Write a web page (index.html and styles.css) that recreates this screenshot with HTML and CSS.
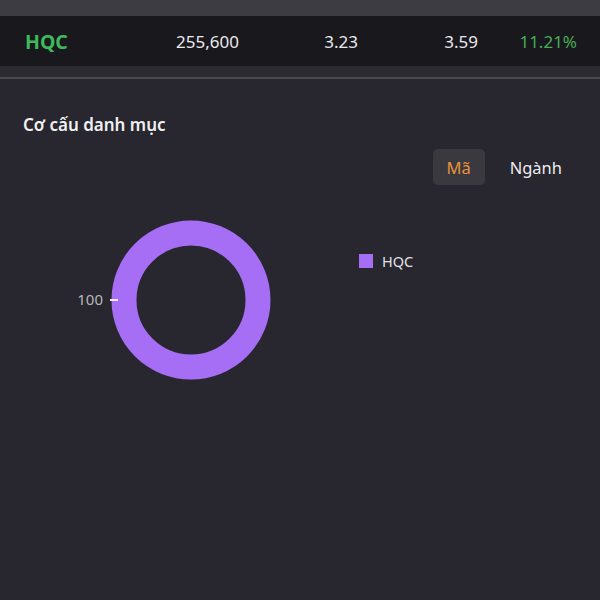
FILE: index.html
```html
<!DOCTYPE html>
<html lang="vi">
<head>
  <meta charset="UTF-8" />
  <meta name="viewport" content="width=device-width, initial-scale=1" />
  <title>Cơ cấu danh mục</title>
  <link rel="stylesheet" href="styles.css">
</head>
<body>

  <div class="top-band"></div>

  <!-- Holding row -->
  <div class="holding-row">
    <span class="cell symbol">HQC</span>
    <span class="cell">255,600</span>
    <span class="cell">3.23</span>
    <span class="cell">3.59</span>
    <span class="cell up">11.21%</span>
  </div>
  <div class="row-foot"></div>

  <!-- Portfolio structure -->
  <div class="panel">
    <h2 class="panel-title">Cơ cấu danh mục</h2>

    <div class="toggle">
      <button class="toggle-btn active">Mã</button>
      <button class="toggle-btn">Ngành</button>
    </div>

    <div class="chart">
      <svg class="donut" width="300" height="170" viewBox="0 0 300 170">
        <circle cx="191" cy="85" r="67" fill="none" stroke="#a66ef4" stroke-width="25" />
        <line x1="110" y1="85" x2="118" y2="85" stroke="#f3e6f7" stroke-width="2" />
        <text x="103" y="90" text-anchor="end" class="donut-label">100</text>
      </svg>

      <div class="legend">
        <span class="legend-swatch"></span>
        <span class="legend-text">HQC</span>
      </div>
    </div>
  </div>

</body>
</html>
```

FILE: styles.css
```css
body {
  margin: 0;
  background-color: #28262e;
  color: #ececef;
  font-family: "Noto Sans", "Open Sans", sans-serif;
  width: 600px;
  height: 600px;
  overflow: hidden;
}
.top-band {
  height: 16px;
  background: #3d3c42;
}
.holding-row {
  height: 50px;
  background: #19181d;
  display: grid;
  grid-template-columns: 120px 94px 119px 120px 99px;
  align-items: center;
  padding-left: 25px;
  font-size: 17px;
}
.cell {
  text-align: right;
  color: #e9e9ec;
}
.cell.symbol {
  text-align: left;
  color: #3dbb5c;
  font-weight: bold;
  font-size: 19.5px;
}
.cell.up {
  color: #45ae55;
}
.row-foot {
  height: 11px;
  background: #2c2b31;
  border-bottom: 2px solid #4a494f;
}
.panel {
  padding: 0 23px;
}
.panel-title {
  margin: 0;
  padding-top: 35px;
  font-size: 17px;
  font-weight: 600;
  line-height: 22px;
  color: #f0f0f2;
}
.toggle {
  display: flex;
  justify-content: flex-end;
  gap: 15px;
  margin-top: 13px;
  padding-right: 5px;
}
.toggle-btn {
  font-family: inherit;
  font-size: 16.5px;
  height: 36px;
  padding: 0 10px;
  border: none;
  border-radius: 5px;
  background: transparent;
  color: #ececef;
}
.toggle-btn.active {
  width: 52px;
  background: #3a393f;
  color: #e8913b;
}
.chart {
  display: flex;
  align-items: flex-start;
  margin-top: 30px;
  margin-left: -23px;
}
.donut-label {
  font-family: "Noto Sans", sans-serif;
  font-size: 15px;
  fill: #b7b6bb;
}
.legend {
  display: flex;
  align-items: center;
  gap: 9px;
  margin-left: 59px;
  margin-top: 36px;
}
.legend-swatch {
  width: 14px;
  height: 14px;
  background: #a66ef4;
}
.legend-text {
  font-size: 14.5px;
  color: #e2e2e6;
}
```
